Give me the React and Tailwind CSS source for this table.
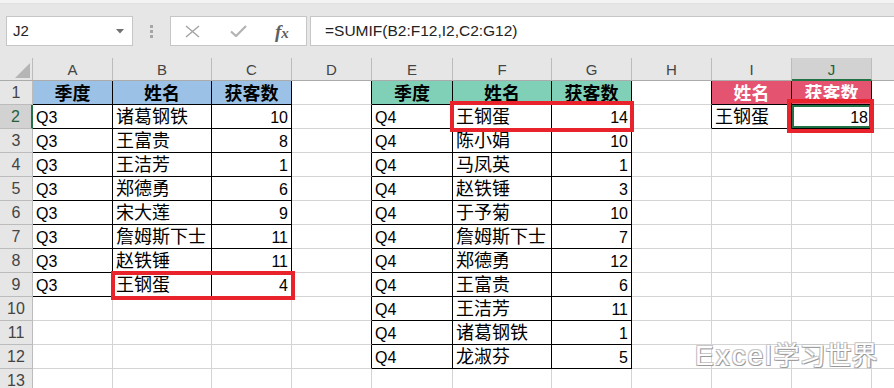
import React from "react";

const COLS = ["A", "B", "C", "D", "E", "F", "G", "H", "I", "J", "K"];
const ROWS = [1, 2, 3, 4, 5, 6, 7, 8, 9, 10, 11, 12, 13];

const q3 = [
    ["Q3", "诸葛钢铁", 10],
    ["Q3", "王富贵", 8],
    ["Q3", "王洁芳", 1],
    ["Q3", "郑德勇", 6],
    ["Q3", "宋大莲", 9],
    ["Q3", "詹姆斯下士", 11],
    ["Q3", "赵铁锤", 11],
    ["Q3", "王钢蛋", 4],
];

const q4 = [
    ["Q4", "王钢蛋", 14],
    ["Q4", "陈小娟", 10],
    ["Q4", "马凤英", 1],
    ["Q4", "赵铁锤", 3],
    ["Q4", "于予菊", 10],
    ["Q4", "詹姆斯下士", 7],
    ["Q4", "郑德勇", 12],
    ["Q4", "王富贵", 6],
    ["Q4", "王洁芳", 11],
    ["Q4", "诸葛钢铁", 1],
    ["Q4", "龙淑芬", 5],
];

const heads = ["季度", "姓名", "获客数"];

const inTable = (r, c) =>
    (c >= 1 && c <= 3 && r >= 1 && r <= 9) ||
    (c >= 5 && c <= 7 && r >= 1 && r <= 12) ||
    (c >= 9 && c <= 10 && r >= 1 && r <= 2);

// what sits in each cell of the sheet
const cellAt = (r, c) => {
    if (r === 1) {
        if (c >= 1 && c <= 3) return { text: heads[c - 1], head: "blue" };
        if (c >= 5 && c <= 7) return { text: heads[c - 5], head: "green" };
        if (c === 9) return { text: "姓名", head: "pink" };
        if (c === 10) return { text: "获客数", head: "pink" };
        return null;
    }
    if (c >= 1 && c <= 3 && r <= 9) {
        const row = q3[r - 2];
        return { text: row[c - 1], num: c === 3, cjk: c === 2 };
    }
    if (c >= 5 && c <= 7 && r <= 12) {
        const row = q4[r - 2];
        return { text: row[c - 5], num: c === 7, cjk: c === 6 };
    }
    if (r === 2 && c === 9) return { text: "王钢蛋", cjk: true };
    if (r === 2 && c === 10) return { text: 18, num: true };
    return null;
};

const headBg = {
    blue: "bg-[#9bc2e6] text-black",
    green: "bg-[#80d0b8] text-black",
    pink: "bg-[#e4536f] text-white",
};

function Cell({ r, c }) {
    const cell = cellAt(r, c);
    const right = inTable(r, c) || inTable(r, c + 1) ? "border-r-black" : "border-r-[#d4d4d4]";
    const bottom = inTable(r, c) || inTable(r + 1, c) ? "border-b-black" : "border-b-[#d4d4d4]";
    const active = r === 2 && c === 10;

    let body = null;
    let bg = "bg-white";
    let align = "justify-start";
    if (cell) {
        if (cell.head) {
            bg = headBg[cell.head];
            align = "justify-center";
            body = <span className="text-[18px] leading-[20px] font-bold">{cell.text}</span>;
        } else if (cell.cjk) {
            body = <span className="text-[18px] leading-[20px] pb-[1px]">{cell.text}</span>;
        } else {
            if (cell.num) align = "justify-end";
            body = <span className="text-[16px] leading-[18px] pb-[1px]">{cell.text}</span>;
        }
    }

    return (
        <div
            className={`flex items-end px-[3px] border-r border-b overflow-hidden whitespace-nowrap ${right} ${bottom} ${bg} ${align} ${
                active ? "shadow-[inset_0_0_0_2px_#217346]" : ""
            }`}
        >
            {body}
        </div>
    );
}

function Toolbar() {
    return (
        <div className="h-[58px] bg-[#e6e6e6] overflow-hidden">
            <div className="h-[4px] bg-[#f3f3f3] border-b border-[#e0e0e0]" />
            <div className="flex h-[30px] mt-[12px]">
                <div className="shrink-0 ml-[6px] w-[127px] bg-white border border-[#c6c6c6] flex items-center justify-between pl-[6px] pr-[8px]">
                    <span className="text-[15px] text-[#222]">J2</span>
                    <svg width="8" height="5" viewBox="0 0 8 5">
                        <path d="M0 0h8L4 4.5z" fill="#707070" />
                    </svg>
                </div>
                <div className="shrink-0 w-[37px] flex flex-col items-center justify-center gap-[2px]">
                    <span className="w-[3px] h-[3px] bg-[#a6a6a6]" />
                    <span className="w-[3px] h-[3px] bg-[#a6a6a6]" />
                    <span className="w-[3px] h-[3px] bg-[#a6a6a6]" />
                </div>
                <div className="shrink-0 w-[137px] bg-white border border-[#c6c6c6] flex items-center pl-[14px]">
                    <svg width="15" height="13" viewBox="0 0 15 13">
                        <path d="M1 1L14 12M14 1L1 12" stroke="#a3a3a3" strokeWidth="1.4" fill="none" />
                    </svg>
                    <svg className="ml-[30px]" width="17" height="12" viewBox="0 0 17 12">
                        <path d="M1 6.5L6 11L16 1" stroke="#b3b3b3" strokeWidth="2.2" fill="none" />
                    </svg>
                    <span className="ml-[28px] text-[19px] italic font-bold text-[#5f5f5f] leading-none font-['Liberation_Serif',serif]">
                        f<span className="text-[15px]">x</span>
                    </span>
                </div>
                <div className="shrink-0 ml-[3px] w-[620px] bg-white border border-[#c6c6c6] flex items-center pl-[14px]">
                    <span className="text-[15.5px] text-[#222]">=SUMIF(B2:F12,I2,C2:G12)</span>
                </div>
            </div>
        </div>
    );
}

function Sheet() {
    return (
        <div className="relative">
            <div className="grid grid-cols-[33px_80px_99px_80px_80px_81px_99px_80px_80px_80px_80px_80px] grid-rows-[23px_repeat(13,24px)] w-max">
                <div className="bg-[#e6e6e6] border-r border-b border-r-[#bcbcbc] border-b-[#ababab] relative">
                    <svg className="absolute left-0 top-0" width="33" height="23" viewBox="0 0 33 23">
                        <path d="M30 5V20H15z" fill="#b5b5b5" />
                    </svg>
                </div>
                {COLS.map((col) =>
                    col === "J" ? (
                        <div
                            key={col}
                            className="flex items-end justify-center pb-[1px] bg-[#d2d2d2] border-r border-r-[#bcbcbc] border-b-2 border-b-[#217346] text-[#21603c]"
                        >
                            <span className="text-[15px] leading-[17px]">{col}</span>
                        </div>
                    ) : (
                        <div
                            key={col}
                            className="flex items-end justify-center pb-[2px] bg-[#e6e6e6] border-r border-b border-r-[#bcbcbc] border-b-[#ababab] text-[#444]"
                        >
                            <span className="text-[15px] leading-[17px]">{col === "K" ? "" : col}</span>
                        </div>
                    )
                )}
                {ROWS.map((r) => (
                    <React.Fragment key={r}>
                        {r === 2 ? (
                            <div className="flex items-end justify-center pb-[2px] bg-[#d2d2d2] border-r-2 border-b border-r-[#217346] border-b-[#bcbcbc] text-[#21603c]">
                                <span className="text-[16px] leading-[18px]">{r}</span>
                            </div>
                        ) : (
                            <div className="flex items-end justify-center pb-[2px] bg-[#e6e6e6] border-r border-b border-r-[#bcbcbc] border-b-[#bcbcbc] text-[#444]">
                                <span className="text-[16px] leading-[18px]">{r}</span>
                            </div>
                        )}
                        {COLS.map((_, i) => (
                            <Cell key={i} r={r} c={i + 1} />
                        ))}
                    </React.Fragment>
                ))}
            </div>

            {/* red call-outs drawn over the cells */}
            <div className="absolute left-[111px] top-[213px] w-[184px] h-[29px] border-4 border-[#e8232b]" />
            <div className="absolute left-[450px] top-[43px] w-[184px] h-[31px] border-4 border-[#e8232b]" />
            <div className="absolute left-[787px] top-[41px] w-[87px] h-[34px] border-4 border-[#e8232b]" />

            <div className="absolute left-[695px] top-[284px] flex items-baseline leading-none text-white [text-shadow:1px_1px_0_#9a9a9a,-1px_-1px_0_#c8c8c8,1px_-1px_0_#c8c8c8,-1px_1px_0_#b0b0b0]">
                <span className="text-[28px] tracking-[2px]">Excel</span>
                <span className="text-[26px]">学习世界</span>
            </div>
        </div>
    );
}

export default function App() {
    return (
        <div className="w-[894px] h-[388px] overflow-hidden bg-white font-['Liberation_Sans','Noto_Sans_CJK_SC',sans-serif] text-black">
            <Toolbar />
            <Sheet />
        </div>
    );
}
